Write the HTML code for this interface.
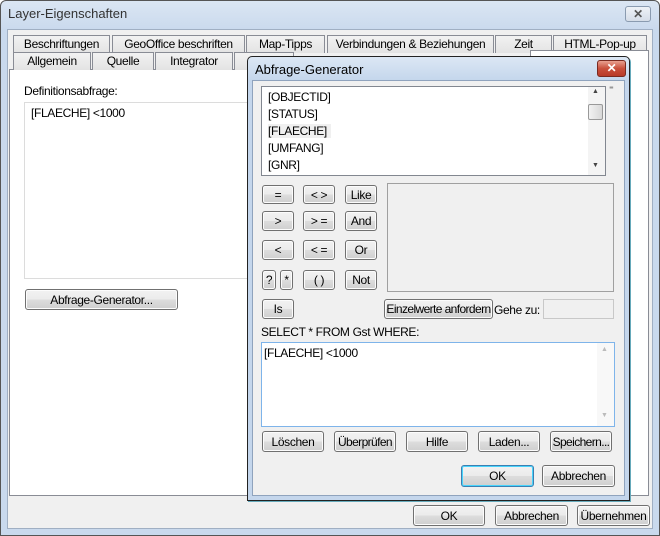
<!DOCTYPE html><html><head><style>
*{box-sizing:border-box;margin:0;padding:0}
body{width:660px;height:536px;overflow:hidden;font-family:"Liberation Sans",sans-serif;font-size:12px;letter-spacing:-0.35px;color:#000;background:#fff;position:relative}
.a{position:absolute;white-space:nowrap}
.btn{position:absolute;white-space:nowrap;border:1px solid #707070;border-radius:3px;background:linear-gradient(#f2f2f2,#ebebeb 50%,#dddddd 51%,#cfcfcf);text-align:center;font-size:12px;display:flex;align-items:center;justify-content:center;box-shadow:inset 0 0 0 1px #fcfcfc}
.tab{position:absolute;white-space:nowrap;border:1px solid #898c95;border-bottom:none;background:linear-gradient(#f2f2f2,#e3e3e3);text-align:center;font-size:12px;height:18px;line-height:17px}
</style></head><body>
<div class="a" style="left:0;top:0;width:660px;height:536px;border:1px solid #555;border-radius:6px 6px 0 0;background:linear-gradient(#dbe6f3,#c9d9ed 30px,#c9d9ed)"></div>
<div class="a" style="left:8px;top:6px;font-size:13px;color:#333;letter-spacing:0">Layer-Eigenschaften</div>
<div class="a" style="left:625px;top:6px;width:26px;height:16px;border:1px solid #8a9bb0;border-radius:3px;background:linear-gradient(#eef2f7,#d5dde8);font-size:12px;text-align:center;line-height:14px;color:#555;font-weight:bold">✕</div>
<div class="a" style="left:7px;top:29px;width:646px;height:500px;background:#f0f0f0;border:1px solid #a0afc3"></div>
<div class="a" style="left:9px;top:69px;width:640px;height:427px;background:#fff;border:1px solid #898c95"></div>
<div class="tab" style="left:13px;top:35px;width:97px">Beschriftungen</div>
<div class="tab" style="left:112px;top:35px;width:133px">GeoOffice beschriften</div>
<div class="tab" style="left:246px;top:35px;width:79px">Map-Tipps</div>
<div class="tab" style="left:327px;top:35px;width:167px">Verbindungen &amp; Beziehungen</div>
<div class="tab" style="left:495px;top:35px;width:57px">Zeit</div>
<div class="tab" style="left:553px;top:35px;width:94px">HTML-Pop-up</div>
<div class="tab" style="left:13px;top:52px;width:78px">Allgemein</div>
<div class="tab" style="left:92px;top:52px;width:62px">Quelle</div>
<div class="tab" style="left:155px;top:52px;width:78px">Integrator</div>
<div class="tab" style="left:234px;top:52px;width:60px"></div>
<div class="a" style="left:530px;top:50px;width:119px;height:20px;background:#fff;border:1px solid #898c95;border-bottom:none"></div>
<div class="a" style="left:24px;top:84px">Definitionsabfrage:</div>
<div class="a" style="left:24px;top:102px;width:230px;height:177px;border:1px solid #dcdcdc;background:#fff;padding:3px 6px">[FLAECHE] &lt;1000</div>
<div class="btn" style="left:25px;top:289px;width:153px;height:21px">Abfrage-Generator...</div>
<div class="btn" style="left:413px;top:505px;width:72px;height:21px">OK</div>
<div class="btn" style="left:495px;top:505px;width:73px;height:21px">Abbrechen</div>
<div class="btn" style="left:577px;top:505px;width:73px;height:21px">Übernehmen</div>
<div class="a" style="left:247px;top:56px;width:383px;height:445px;border:1px solid #222;border-radius:5px 5px 0 0;background:linear-gradient(#dce7f4,#c4d6ec 24px,#c4d6ec);box-shadow:1px 1px 0 #6ab"></div>
<div class="a" style="left:255px;top:62px;font-size:13px;letter-spacing:0">Abfrage-Generator</div>
<div class="a" style="left:597px;top:60px;width:29px;height:17px;border:1px solid #7a2a20;border-radius:3px;background:linear-gradient(#e8a090,#c9503c 50%,#b83a28);color:#fff;font-weight:bold;text-align:center;line-height:15px;font-size:12px">✕</div>
<div class="a" style="left:252px;top:80px;width:373px;height:416px;background:#f0f0f0;border:1px solid #8fa3bd"></div>
<div class="a" style="left:261px;top:86px;width:345px;height:90px;background:#fff;border:1px solid #828790"></div>
<div class="a" style="left:268px;top:89px;line-height:17px">[OBJECTID]<br>[STATUS]<br><span style="background:#f0f0f0;padding-right:4px">[FLAECHE]</span><br>[UMFANG]<br>[GNR]</div>
<div class="a" style="left:588px;top:87px;width:17px;height:88px;background:#f4f4f4"></div>
<div class="a" style="left:588px;top:104px;width:15px;height:16px;border:1px solid #999;border-radius:2px;background:linear-gradient(90deg,#f2f2f2,#d8d8d8)"></div>
<div class="a" style="left:592px;top:88px;font-size:7px;color:#444">▲</div>
<div class="a" style="left:592px;top:162px;font-size:7px;color:#444">▼</div>
<div class="a" style="left:609px;top:84px;font-size:9px;color:#444">⁼</div>
<div class="btn" style="left:262px;top:185px;width:32px;height:19px">=</div>
<div class="btn" style="left:303px;top:185px;width:32px;height:19px">&lt; &gt;</div>
<div class="btn" style="left:345px;top:185px;width:32px;height:19px">Like</div>
<div class="btn" style="left:262px;top:211px;width:32px;height:20px">&gt;</div>
<div class="btn" style="left:303px;top:211px;width:32px;height:20px">&gt; =</div>
<div class="btn" style="left:345px;top:211px;width:32px;height:20px">And</div>
<div class="btn" style="left:262px;top:240px;width:32px;height:20px">&lt;</div>
<div class="btn" style="left:303px;top:240px;width:32px;height:20px">&lt; =</div>
<div class="btn" style="left:345px;top:240px;width:32px;height:20px">Or</div>
<div class="btn" style="left:262px;top:270px;width:14px;height:20px">?</div>
<div class="btn" style="left:280px;top:270px;width:13px;height:20px">*</div>
<div class="btn" style="left:303px;top:270px;width:32px;height:20px">( )</div>
<div class="btn" style="left:345px;top:270px;width:32px;height:20px">Not</div>
<div class="a" style="left:387px;top:183px;width:227px;height:109px;border:1px solid #a0a0a0;background:#f0f0f0"></div>
<div class="btn" style="left:262px;top:299px;width:32px;height:20px">Is</div>
<div class="btn" style="left:384px;top:299px;width:109px;height:20px;letter-spacing:-0.6px">Einzelwerte anfordern</div>
<div class="a" style="left:494px;top:303px">Gehe zu:</div>
<div class="a" style="left:543px;top:299px;width:71px;height:20px;border:1px solid #c8c8c8;background:#f0f0f0"></div>
<div class="a" style="left:261px;top:325px">SELECT * FROM Gst WHERE:</div>
<div class="a" style="left:261px;top:342px;width:354px;height:85px;background:#fff;border:1px solid #7eb4ea;padding:3px 2px">[FLAECHE] &lt;1000</div>
<div class="a" style="left:597px;top:343px;width:17px;height:83px;background:#f8f8f8"></div>
<div class="a" style="left:601px;top:346px;font-size:7px;color:#bbb">▲</div>
<div class="a" style="left:601px;top:412px;font-size:7px;color:#bbb">▼</div>
<div class="btn" style="left:262px;top:431px;width:62px;height:21px">Löschen</div>
<div class="btn" style="left:334px;top:431px;width:62px;height:21px;letter-spacing:-0.6px">Überprüfen</div>
<div class="btn" style="left:406px;top:431px;width:62px;height:21px">Hilfe</div>
<div class="btn" style="left:478px;top:431px;width:62px;height:21px">Laden...</div>
<div class="btn" style="left:550px;top:431px;width:62px;height:21px;letter-spacing:-0.6px">Speichern...</div>
<div class="btn" style="left:461px;top:465px;width:73px;height:22px;border-color:#3c7fb1;box-shadow:inset 0 0 0 1px #48d4fc">OK</div>
<div class="btn" style="left:542px;top:465px;width:73px;height:22px">Abbrechen</div>
</body></html>
